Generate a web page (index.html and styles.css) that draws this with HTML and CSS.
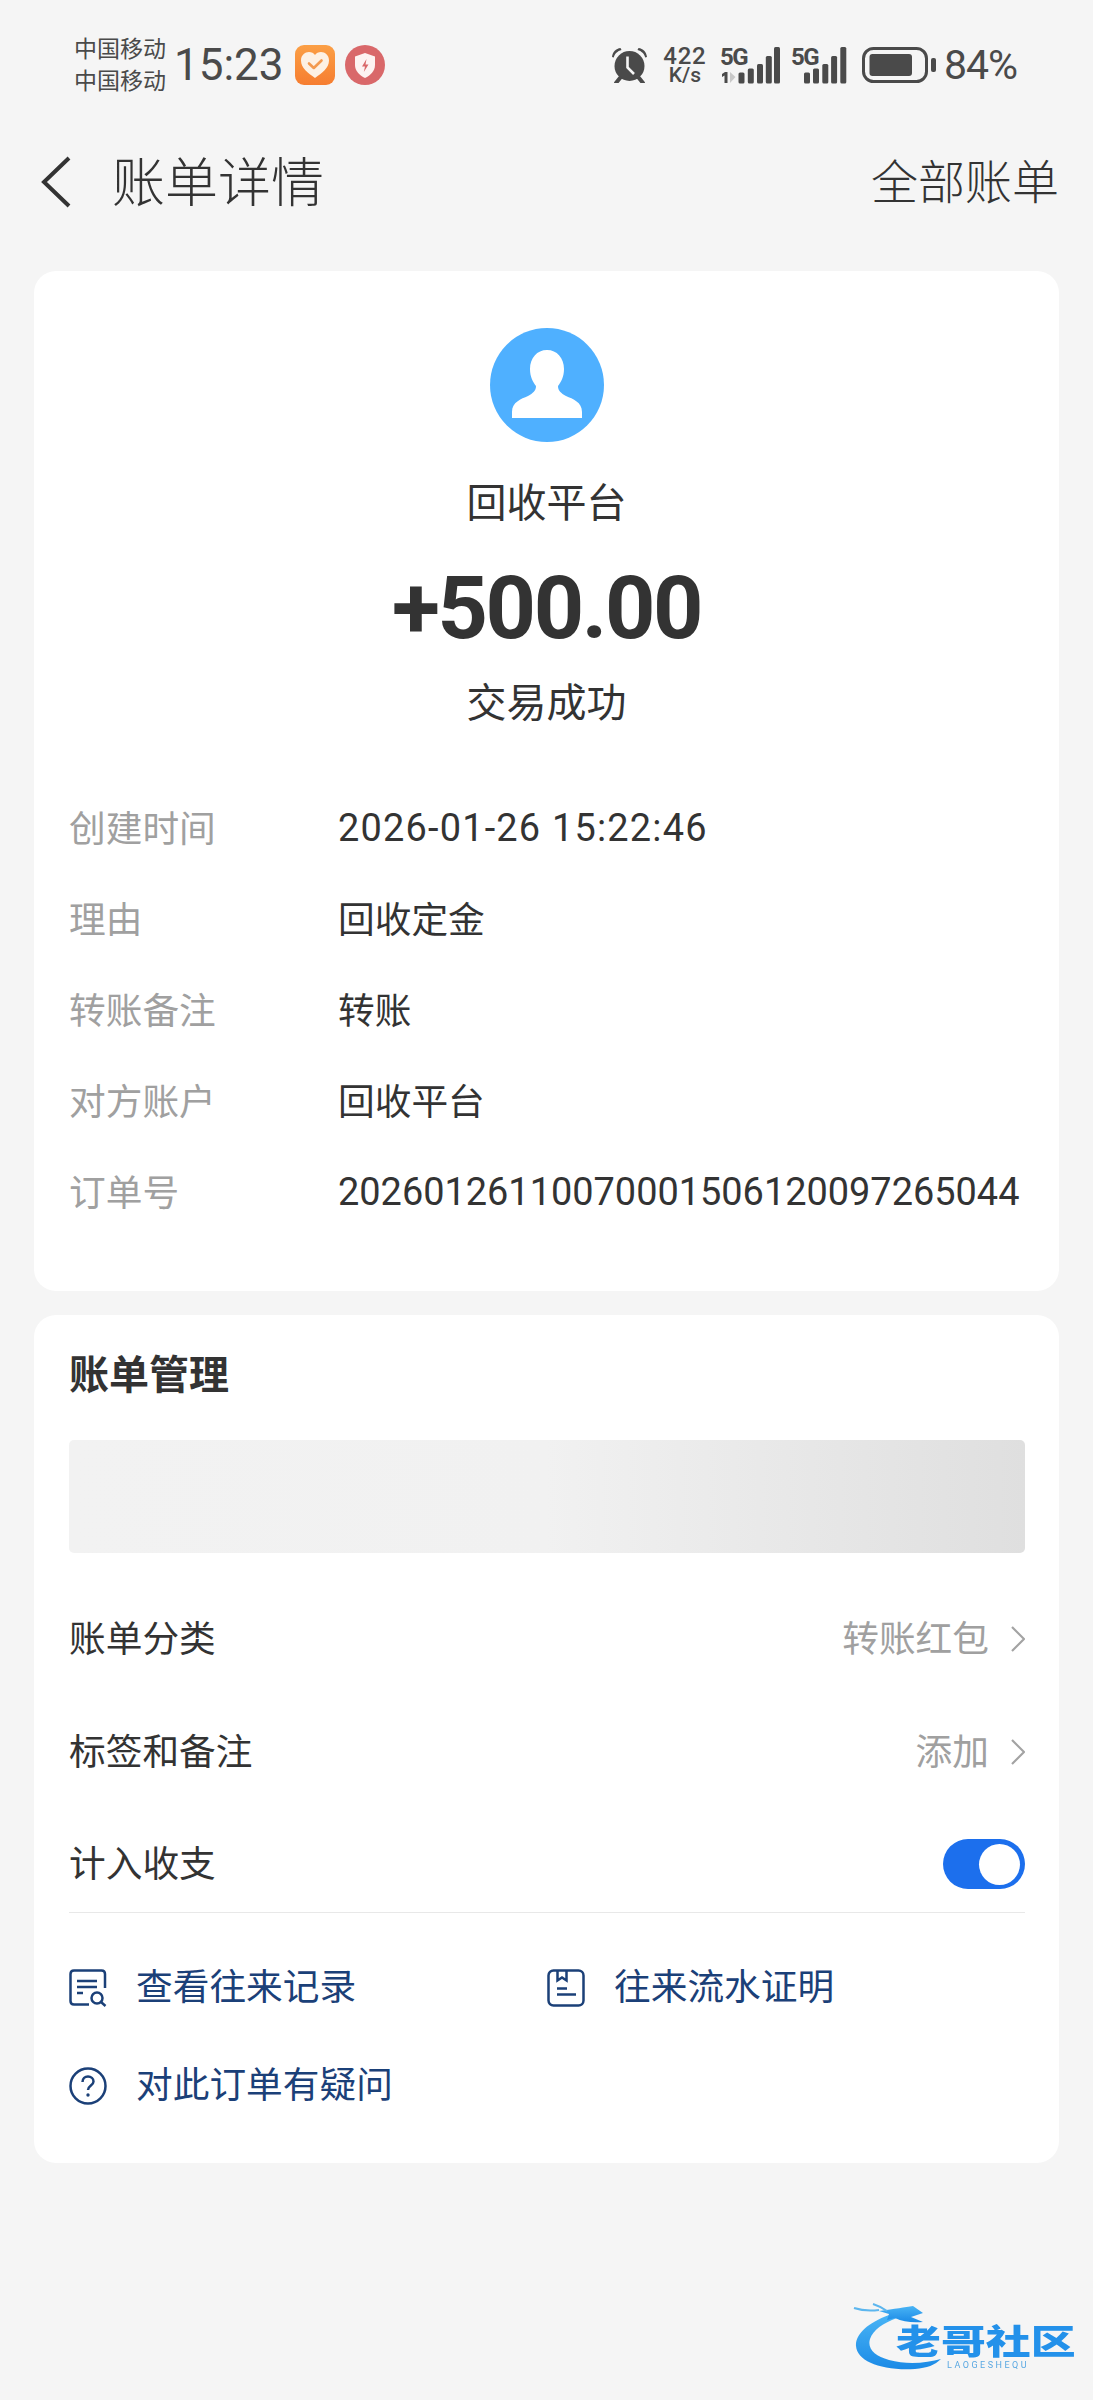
FILE: index.html
```html
<!DOCTYPE html>
<html lang="zh-CN">

<head>
  <meta charset="utf-8">
  <title>账单详情</title>
  <link rel="stylesheet" href="styles.css">
</head>

<body>
  <div class="page">
    <!-- Status bar -->
    <div class="status-bar">
      <div class="carrier">
        <span>中国移动</span>
        <span>中国移动</span>
      </div>
      <span class="clock">15:23</span>
      <svg class="app-icon" viewBox="0 0 40 40">
        <defs>
          <linearGradient id="orangeFill" x1="0" y1="0" x2="0" y2="1">
            <stop offset="0" stop-color="#fb9f45" />
            <stop offset="1" stop-color="#f67d30" />
          </linearGradient>
        </defs>
        <rect width="40" height="40" rx="9" fill="url(#orangeFill)" />
        <path d="M20 33 C13 28 6 23 6 15.500 C6 10 10 7 14 7 C16.500 7 18.800 8.200 20 10 C21.200 8.200 23.500 7 26 7 C30 7 34 10 34 15.500 C34 23 27 28 20 33Z" fill="#fdf1e4" />
        <path d="M14 18.500 L18.800 23 L26.500 15.500" fill="none" stroke="#f39a50" stroke-width="2.600" stroke-linecap="round" stroke-linejoin="round" />
      </svg>
      <svg class="app-icon shield-icon" viewBox="0 0 40 40">
        <circle cx="20" cy="20" r="20" fill="#d9686a" />
        <path d="M20 8 L30 11.500 V20 C30 26 25.500 30.500 20 33 C14.500 30.500 10 26 10 20 V11.500Z" fill="#fdf3f2" />
        <path d="M21.500 14 L17 21.500 H20 L18.800 27 L23.500 19.500 H20.500Z" fill="#d9686a" />
      </svg>

      <div class="status-right">
        <svg class="alarm" viewBox="0 0 37 36">
          <path d="M1 10 C1.500 5 5 1.500 9.500 1 L10.500 3 C6.500 4 3.500 7 2.800 10.500Z" fill="#4a4a4a" />
          <path d="M36 10 C35.500 5 32 1.500 27.500 1 L26.500 3 C30.500 4 33.500 7 34.200 10.500Z" fill="#4a4a4a" />
          <circle cx="18.500" cy="19" r="15" fill="#4a4a4a" />
          <path d="M5 36 L9 31 M32 36 L28 31" stroke="#4a4a4a" stroke-width="4" stroke-linecap="round" />
          <path d="M16.500 9.500 V20.500 L23 27" fill="none" stroke="#f5f5f5" stroke-width="2.600" />
        </svg>
        <div class="net-speed">
          <span class="speed-value">422</span>
          <span class="speed-unit">K/s</span>
        </div>
        <svg class="signal signal-first" viewBox="0 -8 60 45">
          <text class="signal-label" x="0" y="18">5G</text>
          <path d="M2 27 L5 25 H7.500 V36 H4.500 V28.500 L2 30Z" fill="#4a4a4a" />
          <path d="M10 25 L15.500 30 L10 36Z" fill="#c9c9c9" />
          <rect x="18.500" y="25.500" width="6" height="11" rx="1.500" fill="#4a4a4a" />
          <rect x="27.800" y="21.500" width="6" height="15" rx="1.500" fill="#4a4a4a" />
          <rect x="37" y="17" width="6" height="19.500" rx="1.500" fill="#4a4a4a" />
          <rect x="45.800" y="9" width="6" height="27.500" rx="1.500" fill="#4a4a4a" />
          <rect x="54" y="0" width="6" height="36.500" rx="1.500" fill="#4a4a4a" />
        </svg>
        <svg class="signal signal-second" viewBox="0 -8 56 45">
          <text class="signal-label" x="0" y="18">5G</text>
          <rect x="13" y="25.500" width="6" height="11" rx="1.500" fill="#4a4a4a" />
          <rect x="22" y="21.500" width="6" height="15" rx="1.500" fill="#4a4a4a" />
          <rect x="31.300" y="17" width="6" height="19.500" rx="1.500" fill="#4a4a4a" />
          <rect x="40.100" y="9" width="6" height="27.500" rx="1.500" fill="#4a4a4a" />
          <rect x="49.300" y="0" width="6" height="36.500" rx="1.500" fill="#4a4a4a" />
        </svg>
        <svg class="battery" viewBox="0 0 74 36">
          <rect x="1.500" y="1.500" width="63" height="33" rx="10" fill="none" stroke="#4a4a4a" stroke-width="3" />
          <rect x="7.500" y="7" width="42.500" height="22" rx="3" fill="#4a4a4a" />
          <rect x="69" y="11" width="5" height="14" rx="2" fill="#4a4a4a" />
        </svg>
        <span class="percent">84%</span>
      </div>
    </div>

    <!-- Top navigation -->
    <div class="nav">
      <svg class="back" viewBox="0 0 32 52">
        <path d="M29 2 L4 26 L29 50" fill="none" stroke="#333" stroke-width="4" />
      </svg>
      <span class="nav-title">账单详情</span>
      <span class="nav-link">全部账单</span>
    </div>

    <!-- Transaction summary -->
    <div class="card summary-card">
      <svg class="avatar" viewBox="0 0 114 114">
        <circle cx="57" cy="57" r="57" fill="#4fb0ff" />
        <path d="M57 22 C67 22 74 30 74 41 C74 49 71 54 68 58 C68 63 71 65 76 68 C83 71 92 74 92 84 V90 H22 V84 C22 74 31 71 38 68 C43 65 46 63 46 58 C43 54 40 49 40 41 C40 30 47 22 57 22Z" fill="#fff" />
      </svg>
      <div class="party">回收平台</div>
      <div class="amount">+500.00</div>
      <div class="trade-state">交易成功</div>

      <div class="details">
        <div class="detail-row">
          <span class="detail-label">创建时间</span>
          <span class="detail-number detail-date">2026-01-26 15:22:46</span>
        </div>
        <div class="detail-row">
          <span class="detail-label">理由</span>
          <span class="detail-text">回收定金</span>
        </div>
        <div class="detail-row">
          <span class="detail-label">转账备注</span>
          <span class="detail-text">转账</span>
        </div>
        <div class="detail-row">
          <span class="detail-label">对方账户</span>
          <span class="detail-text">回收平台</span>
        </div>
        <div class="detail-row">
          <span class="detail-label">订单号</span>
          <span class="detail-number">20260126110070001506120097265044</span>
        </div>
      </div>
    </div>

    <!-- Bill management -->
    <div class="card manage-card">
      <div class="manage-title">账单管理</div>
      <div class="banner"></div>

      <div class="manage-row">
        <span class="row-label">账单分类</span>
        <span class="row-value"><span class="row-label">转账红包</span>
          <svg class="chevron" viewBox="0 0 14 26">
            <path d="M1 1 L13 13 L1 25" fill="none" stroke="#a3a3a3" stroke-width="2.200" />
          </svg>
        </span>
      </div>
      <div class="manage-row">
        <span class="row-label">标签和备注</span>
        <span class="row-value"><span class="row-label">添加</span>
          <svg class="chevron" viewBox="0 0 14 26">
            <path d="M1 1 L13 13 L1 25" fill="none" stroke="#a3a3a3" stroke-width="2.200" />
          </svg>
        </span>
      </div>
      <div class="manage-row manage-row-last">
        <span class="row-label">计入收支</span>
        <div class="toggle">
          <div class="toggle-knob"></div>
        </div>
      </div>

      <div class="actions">
        <div class="action">
          <svg class="action-icon" viewBox="0 0 38 38">
            <path d="M36 19 V5 Q36 1.500 32.500 1.500 H5 Q1.500 1.500 1.500 5 V32 Q1.500 35.500 5 35.500 H20" fill="none" stroke="#1b4078" stroke-width="2.500" />
            <path d="M8 12 H28 M8 18 H28 M8 24 H14" fill="none" stroke="#1b4078" stroke-width="2.500" />
            <circle cx="28" cy="29" r="5.500" fill="none" stroke="#1b4078" stroke-width="2.500" />
            <path d="M32 33 L36.500 37" stroke="#1b4078" stroke-width="2.500" />
          </svg>
          <span class="action-text">查看往来记录</span>
        </div>
        <div class="action">
          <svg class="action-icon" viewBox="0 0 38 38">
            <rect x="1.500" y="1.500" width="35" height="35" rx="5" fill="none" stroke="#1b4078" stroke-width="2.500" />
            <path d="M10.500 2 V11.500 L15 8.500 L19.500 11.500 V2" fill="none" stroke="#1b4078" stroke-width="2.500" />
            <path d="M10 19.500 H20 M10 25.500 H29" fill="none" stroke="#1b4078" stroke-width="2.500" />
          </svg>
          <span class="action-text">往来流水证明</span>
        </div>
        <div class="action">
          <svg class="action-icon" viewBox="0 0 38 38">
            <circle cx="19" cy="19" r="17.500" fill="none" stroke="#1b4078" stroke-width="2.500" />
            <path d="M13.500 15 C13.500 11.500 16 9.500 19 9.500 C22 9.500 24.500 11.500 24.500 14.500 C24.500 18.500 19 18.500 19 23" fill="none" stroke="#1b4078" stroke-width="2.500" />
            <circle cx="19" cy="28" r="1.700" fill="#1b4078" />
          </svg>
          <span class="action-text">对此订单有疑问</span>
        </div>
      </div>
    </div>

    <!-- Forum watermark over the screenshot -->
    <div class="watermark">
      <svg class="dragon" viewBox="0 0 100 68">
        <defs>
          <linearGradient id="dragonFill" x1="0" y1="0" x2="0" y2="1">
            <stop offset="0" stop-color="#49b4f5" />
            <stop offset="1" stop-color="#1b8ae6" />
          </linearGradient>
        </defs>
        <path d="M36 12 C14 20 2 32 3 43 C4 58 28 68 62 66 C74 65 82 62 88 56 C74 60 54 62 36 57 C22 53 14 46 17 36 C20 27 30 20 44 15Z" fill="url(#dragonFill)" />
        <path d="M26 8 C42 6 52 4 60 3 L70 10 L58 14 L70 19 C60 20 50 19 42 15 L34 17 L36 11Z" fill="url(#dragonFill)" />
        <path d="M1 5 C10 8 18 8 26 7 M20 1 C26 3 30 5 34 8" fill="none" stroke="#5cb6ee" stroke-width="2" />
      </svg>
      <div class="mark-name">老哥社区</div>
      <div class="mark-latin">LAOGESHEQU</div>
    </div>
  </div>
</body>

</html>
```

FILE: styles.css
```css
* {
  box-sizing: border-box;
}

body {
  margin: 0;
  background-color: #f5f5f5;
  font-family: "Noto Sans CJK SC", "Noto Sans", sans-serif;
  color: #333;
}

.page {
  position: relative;
  height: 2400px;
  overflow: hidden;
}

/* Status bar */
.status-bar {
  display: flex;
  align-items: center;
  height: 130px;
  padding: 0 76px 0 74px;
  color: #4a4a4a;
}

.carrier {
  display: flex;
  flex-direction: column;
  width: 92px;
  padding-bottom: 4px;
  font-size: 23px;
  line-height: 32px;
}

.clock {
  margin-left: 8px;
  font-family: Roboto, sans-serif;
  font-size: 44px;
  line-height: 50px;
}

.app-icon {
  width: 40px;
  height: 40px;
  margin-left: 11px;
}

.shield-icon {
  margin-left: 10px;
}

.status-right {
  display: flex;
  align-items: center;
  margin-left: auto;
}

.alarm {
  width: 37px;
  height: 36px;
}

.net-speed {
  display: flex;
  flex-direction: column;
  align-items: center;
  width: 42px;
  margin-left: 16px;
  font-family: Roboto, sans-serif;
  font-weight: 500;
}

.speed-value {
  font-size: 24px;
  line-height: 20px;
  letter-spacing: 0.700px;
}

.speed-unit {
  font-size: 21px;
  line-height: 18px;
}

.signal {
  height: 45px;
  margin-top: -8px;
}

.signal-first {
  width: 60px;
  margin-left: 14px;
}

.signal-second {
  width: 56px;
  margin-left: 11px;
}

.signal-label {
  font-family: Roboto, sans-serif;
  font-size: 24px;
  font-weight: 700;
  letter-spacing: -1.500px;
  fill: #4a4a4a;
}

.battery {
  width: 74px;
  height: 36px;
  margin-left: 15px;
}

.percent {
  margin-left: 8px;
  font-family: Roboto, sans-serif;
  font-size: 41px;
  line-height: 50px;
  letter-spacing: -1px;
}

/* Top navigation */
.nav {
  display: flex;
  align-items: center;
  height: 141px;
  padding: 0 34px 37px 40px;
}

.back {
  width: 32px;
  height: 52px;
}

.nav-title {
  margin-left: 40px;
  padding-bottom: 6px;
  font-size: 53px;
  font-weight: 300;
  line-height: 70px;
}

.nav-link {
  margin-left: auto;
  padding-bottom: 6px;
  font-size: 47px;
  font-weight: 300;
  line-height: 70px;
}

/* Cards */
.card {
  margin: 0 34px;
  background-color: #fff;
  border-radius: 22px;
}

.summary-card {
  display: flex;
  flex-direction: column;
  align-items: center;
  height: 1020px;
  padding-top: 57px;
  margin-bottom: 24px;
}

.avatar {
  width: 114px;
  height: 114px;
}

.party {
  margin-top: 33px;
  font-size: 40px;
  line-height: 50px;
}

.amount {
  margin-top: 33px;
  font-family: Roboto, sans-serif;
  font-size: 88px;
  font-weight: 700;
  line-height: 100px;
  letter-spacing: -2.400px;
}

.trade-state {
  margin-top: 17px;
  font-size: 40px;
  line-height: 50px;
}

.details {
  align-self: stretch;
  margin-top: 58px;
  padding: 0 35px;
}

.detail-row {
  display: flex;
  align-items: center;
  height: 91px;
  font-size: 36.700px;
}

.detail-label {
  width: 269px;
  padding-bottom: 5px;
  color: #a0a0a0;
}

.detail-text {
  padding-bottom: 5px;
}

.detail-number {
  padding-bottom: 1px;
  font-family: Roboto, sans-serif;
  font-size: 37.900px;
}

.detail-date {
  letter-spacing: 1.200px;
}

/* Bill management card */
.manage-card {
  height: 848px;
  padding: 32px 34px 0 35px;
}

.manage-title {
  font-size: 40px;
  font-weight: 700;
  line-height: 50px;
}

.banner {
  height: 113px;
  margin-top: 43px;
  border-radius: 5px;
  background: linear-gradient(90deg, #f2f2f2 0%, #f1f1f1 50%, #dfdfdf 100%);
}

.manage-row {
  display: flex;
  align-items: center;
  justify-content: space-between;
  height: 113px;
  font-size: 36.700px;
}

.row-label {
  padding-bottom: 6px;
}

.banner + .manage-row {
  margin-top: 29px;
}

.manage-row-last {
  height: 105px;
  padding-top: 8px;
  border-bottom: 1px solid #e8e8e8;
}

.row-value {
  display: flex;
  align-items: center;
  gap: 22px;
  color: #a0a0a0;
}

.chevron {
  width: 14px;
  height: 26px;
}

.toggle {
  display: flex;
  justify-content: flex-end;
  align-items: center;
  width: 82px;
  height: 50px;
  padding-right: 5px;
  border-radius: 25px;
  background-color: #1c6fed;
}

.toggle-knob {
  width: 41px;
  height: 41px;
  border-radius: 50%;
  background-color: #fff;
}

.actions {
  display: grid;
  grid-template-columns: 478px 1fr;
  grid-auto-rows: 98px;
  margin-top: 25px;
}

.action {
  display: flex;
  align-items: center;
  gap: 29px;
  font-size: 36.700px;
  color: #1b4078;
}

.action-icon {
  width: 38px;
  height: 38px;
  margin-top: 2px;
}

.action-text {
  padding-bottom: 6px;
}

/* Watermark */
.watermark {
  position: absolute;
  top: 2303px;
  left: 853px;
  width: 226px;
  height: 72px;
  filter: blur(0.5px);
}

.dragon {
  width: 100px;
  height: 68px;
}

.mark-name {
  position: absolute;
  top: 18px;
  left: 43px;
  width: 136px;
  font-size: 34px;
  font-weight: 900;
  line-height: 38px;
  color: #2391ea;
  white-space: nowrap;
  transform: scaleX(1.320);
  transform-origin: left top;
}

.mark-latin {
  position: absolute;
  top: 57px;
  left: 94px;
  font-family: Roboto, sans-serif;
  font-size: 9px;
  line-height: 11px;
  letter-spacing: 2.500px;
  color: #5aa8e2;
}
```
